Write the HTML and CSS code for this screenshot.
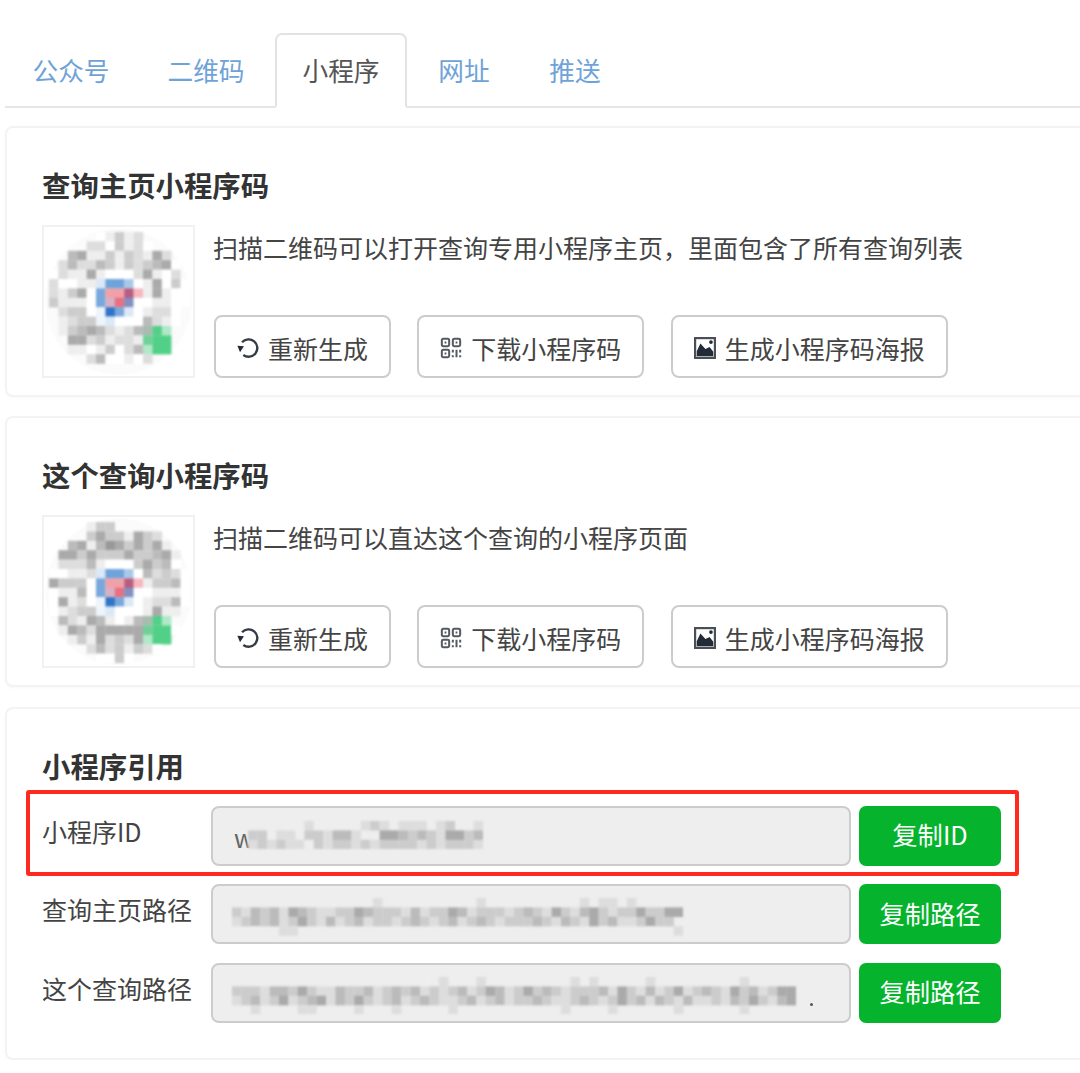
FILE: index.html
```html
<!DOCTYPE html>
<html lang="zh-CN">
<head>
<meta charset="utf-8">
<title>小程序</title>
<link rel="stylesheet" href="styles.css">
</head>
<body>
<main class="page">
  <ul class="tabs">
    <li class="tab">公众号</li>
    <li class="tab">二维码</li>
    <li class="tab tab-active">小程序</li>
    <li class="tab tab-short">网址</li>
    <li class="tab tab-short">推送</li>
  </ul>

  <section class="card">
    <h2 class="card-title">查询主页小程序码</h2>
    <div class="media">
      <div class="qr" data-mosaic="qrHome"></div>
      <div class="media-body">
        <p class="desc">扫描二维码可以打开查询专用小程序主页，里面包含了所有查询列表</p>
        <div class="actions">
          <button class="btn"><svg class="icon" viewBox="0 0 24 24"><path class="stroke" d="M5.500 5.800A9.500 9.500 0 1 1 6.900 19.600"/><path class="solid" d="M.4 9.500 7.600 10.200 3.300 16.700Z"/></svg>重新生成</button>
          <button class="btn"><svg class="icon" viewBox="0 0 24 24"><g class="stroke-thin"><rect x="2" y="2" width="8" height="8" rx="1.500"/><rect x="14" y="2" width="8" height="8" rx="1.500"/><rect x="2" y="14" width="8" height="8" rx="1.500"/><path d="M14 14v3M14 20v2M18 14v8M22 14v3M22 20v2"/></g><path class="solid-grey" d="M5 5h2v2H5zM17 5h2v2h-2zM5 17h2v2H5z"/></svg>下载小程序码</button>
          <button class="btn"><svg class="icon" viewBox="0 0 24 24"><rect class="frame" x="1.200" y="1.200" width="21.600" height="21.600"/><path class="solid" d="M3 21V15.500L7 7 12.500 13 17 11 21 16V21Z"/><circle class="solid" cx="18.500" cy="5.500" r="2"/></svg>生成小程序码海报</button>
        </div>
      </div>
    </div>
  </section>

  <section class="card">
    <h2 class="card-title">这个查询小程序码</h2>
    <div class="media">
      <div class="qr" data-mosaic="qrQuery"></div>
      <div class="media-body">
        <p class="desc">扫描二维码可以直达这个查询的小程序页面</p>
        <div class="actions">
          <button class="btn"><svg class="icon" viewBox="0 0 24 24"><path class="stroke" d="M5.500 5.800A9.500 9.500 0 1 1 6.900 19.600"/><path class="solid" d="M.4 9.500 7.600 10.200 3.300 16.700Z"/></svg>重新生成</button>
          <button class="btn"><svg class="icon" viewBox="0 0 24 24"><g class="stroke-thin"><rect x="2" y="2" width="8" height="8" rx="1.500"/><rect x="14" y="2" width="8" height="8" rx="1.500"/><rect x="2" y="14" width="8" height="8" rx="1.500"/><path d="M14 14v3M14 20v2M18 14v8M22 14v3M22 20v2"/></g><path class="solid-grey" d="M5 5h2v2H5zM17 5h2v2h-2zM5 17h2v2H5z"/></svg>下载小程序码</button>
          <button class="btn"><svg class="icon" viewBox="0 0 24 24"><rect class="frame" x="1.200" y="1.200" width="21.600" height="21.600"/><path class="solid" d="M3 21V15.500L7 7 12.500 13 17 11 21 16V21Z"/><circle class="solid" cx="18.500" cy="5.500" r="2"/></svg>生成小程序码海报</button>
        </div>
      </div>
    </div>
  </section>

  <section class="card card-last">
    <h2 class="card-title card-title-tight">小程序引用</h2>
    <div class="form">
      <div class="form-row">
        <label class="form-label">小程序ID</label>
        <div class="field"><span class="field-text">w</span><div class="field-blur blur-id" data-mosaic="fieldId"></div></div>
        <button class="copy">复制ID</button>
      </div>
      <div class="form-row">
        <label class="form-label">查询主页路径</label>
        <div class="field"><div class="field-blur blur-home" data-mosaic="fieldHome"></div></div>
        <button class="copy">复制路径</button>
      </div>
      <div class="form-row">
        <label class="form-label">这个查询路径</label>
        <div class="field"><div class="field-blur blur-query" data-mosaic="fieldQuery"></div><span class="field-dot"></span></div>
        <button class="copy">复制路径</button>
      </div>
      <div class="highlight"></div>
    </div>
  </section>
</main>
<script src="mosaic.js"></script>
</body>
</html>
```

FILE: styles.css
```css
* { box-sizing: border-box; }
html, body { margin: 0; overflow: hidden; background: #fff; }
body { font-family: "Noto Sans CJK SC", "Noto Sans", sans-serif; font-size: 25px; color: #444; }
.page { width: 1120px; margin-left: 5px; padding-top: 33px; }

.tabs { display: flex; gap: 3px; margin: 0 0 18px; padding: 0; list-style: none; height: 75px; border-bottom: 2px solid #e6e6e6; }
.tab { width: 132px; height: 75px; padding-top: 15px; text-align: center; font-size: 25.700px; line-height: 40px; color: #6fa3d8; border: 2px solid transparent; border-radius: 7px 7px 0 0; }
.tab-short { width: 108px; }
.tab-active { color: #555; background: #fff; border-color: #e2e2e2; border-bottom-color: #fff; }

.card { height: 271px; margin-bottom: 19.300px; padding: 37px 35px 0; background: #fff; border: 2px solid #f3f3f3; border-radius: 8px; box-shadow: 0 1px 3px rgba(0, 0, 0, .03); }
.card-last { height: 353px; margin-bottom: 0; }
.card-title { margin: 0 0 20px; font-size: 28.400px; line-height: 40px; font-weight: 700; color: #333; }
.card-title-tight { margin-bottom: 20px; }

.media { display: flex; gap: 18px; }
.qr { flex: none; width: 153px; height: 153px; padding: 5px 0 0 5px; border: 2px solid #f1f1f1; overflow: hidden; background: radial-gradient(circle at 50% 50%, #fbfbfb 72px, #fff 74px); }
.media-body { display: flex; flex-direction: column; justify-content: space-between; height: 153px; padding-top: 4px; }
.desc { margin: 0; line-height: 36px; color: #444; }
.actions { display: flex; gap: 26.300px; padding-left: 1px; }

.btn { display: flex; align-items: center; gap: 9px; height: 63px; padding: 2px 21px 0 21px; font: inherit; color: #444; background: #fff; border: 2px solid #ccc; border-radius: 8px; }
.icon { flex: none; width: 22px; height: 22px; }
.stroke { fill: none; stroke: #333b45; stroke-width: 2.600; }
.stroke-thin { fill: none; stroke: #555a62; stroke-width: 2.200; }
.solid { fill: #222b36; }
.solid-grey { fill: #555a62; }
.frame { fill: #fff; stroke: #4a4f57; stroke-width: 2.400; }

.form { position: relative; display: flex; flex-direction: column; gap: 18.500px; }
.form-row { display: flex; align-items: center; height: 60px; }
.form-label { flex: none; width: 169px; padding-bottom: 10px; line-height: 36px; color: #444; }
.field { position: relative; flex: none; width: 640px; height: 60px; background: #eee; border: 2px solid #ccc; border-radius: 8px; }
.field-text { position: absolute; left: 21px; top: 11px; line-height: 36px; color: #666; }
.field-blur { position: absolute; }
.blur-id { left: 35px; top: 13px; }
.blur-home { left: 19px; top: 12px; }
.blur-query { left: 19px; top: 12px; }
.field-dot { position: absolute; left: 597px; top: 38px; width: 3px; height: 3px; border-radius: 50%; background: #555; }
.copy { flex: none; width: 142px; height: 60px; margin-left: 8px; padding: 0 0 3px; font: inherit; font-size: 25.300px; color: #fff; background: #05b42c; border: 0; border-radius: 7px; }

.highlight { position: absolute; left: -16px; top: -16px; width: 993px; height: 86px; border: 4px solid #ff2a1f; border-radius: 3px; pointer-events: none; }

.mosaic { display: block; filter: blur(1px); }
```

FILE: mosaic.js
```js
// Pixelated (redacted) content: one character per cell.
// Hex digit = grey level, "." = empty, letters = colours of the QR logo.
var COLOURS = {
  h: "#dbe8f5", i: "#6fa3dc", j: "#a8c8e8", k: "#78a8dc", l: "#f0a0a8",
  m: "#b85c80", n: "#f5b8c0", o: "#d8b0c4", p: "#e87080", q: "#8090c0",
  r: "#2f74c8", s: "#eef4fb", t: "#52d088", u: "#b0e8c8", v: "#70d098",
  w: "#a8bcb0"
};

var MOSAICS = {
  qrHome: { cell: 9.4, rows: [
    ".....feced......",
    "....ddfcedf.....",
    "..baeececdead...",
    ".dbddbcecdcbaf..",
    "fdeeaefffdaefd..",
    "dffeehiijfeafcf.",
    "decafkllmneaeff.",
    "ceeefkopqffeeff.",
    ".dccfsrkhfeddf..",
    ".edccshfffbdef..",
    ".ecbabdedbwtu...",
    "..aadceddevtt...",
    "..eefecfdbutt...",
    "....dbffefd....."
  ]},
  qrQuery: { cell: 9.4, rows: [
    "....ecc.........",
    "....cacceacd....",
    "..baeb9acacae...",
    ".aacacccaccbae..",
    ".dddbefffcacbf..",
    "ffeedhiijfbdcdf.",
    "acccfkllmneccbf.",
    "feebfkopqffeeef.",
    "faedfsrkhfeddbf.",
    "fedccshfffeaee..",
    ".bdeabefebwtu...",
    ".eabdaaaaavttf..",
    "..eceadcdautt...",
    "....dbdcecdf....",
    ".....ffcf......."
  ]},
  fieldId: { cell: 9.4, rows: [
    "....e.de.e..dcd.ddd.dc..d",
    "cc.dd.ccdbbd..aabcbcdaacb",
    "dcdcddecdccdcdccccdcdcccd"
  ]},
  fieldHome: { cell: 9.4, rows: [
    "..........ee...d...e...e..de.e.....e.d.dd.d...e.",
    "cdbcbdabcddccabcccdbdccabdcccdcbcdacdbacdccaccaa",
    "dcbcbdcacdbdcbdccdcbcdcbdcbcdcccbcdbcdacbddcacc.",
    "..e..dd................................e....e..d"
  ]},
  fieldQuery: { cell: 9.4, rows: [
    "..e.......ee..e....ee.d.e.d..e....e.d.de..e.d..e...ee.d....e",
    "cccdbbcacddbccbdcbcbdcdcbdcabdcacbcdcccbdacdbdcadcbcdacbdcaa",
    "dcbdcadcbadbcacdcbdcbcddcbdcbdccbcddcbcdcacbdbcdbddcdbcacdba",
    "..d....dd....d...d.....d....e......d....d......d......d....."
  ]}
};

function drawMosaic(el) {
  var data = MOSAICS[el.dataset.mosaic];
  var cols = Math.max.apply(null, data.rows.map(function (r) { return r.length; }));
  var NS = "http://www.w3.org/2000/svg";
  var svg = document.createElementNS(NS, "svg");
  svg.setAttribute("class", "mosaic");
  svg.setAttribute("width", cols * data.cell);
  svg.setAttribute("height", data.rows.length * data.cell);
  data.rows.forEach(function (row, y) {
    row.split("").forEach(function (ch, x) {
      if (ch === ".") return;
      var rect = document.createElementNS(NS, "rect");
      rect.setAttribute("x", x * data.cell);
      rect.setAttribute("y", y * data.cell);
      rect.setAttribute("width", data.cell + 0.2);
      rect.setAttribute("height", data.cell + 0.2);
      rect.setAttribute("fill", COLOURS[ch] || "#" + ch + ch + ch);
      svg.appendChild(rect);
    });
  });
  el.appendChild(svg);
}

document.querySelectorAll("[data-mosaic]").forEach(drawMosaic);
```
